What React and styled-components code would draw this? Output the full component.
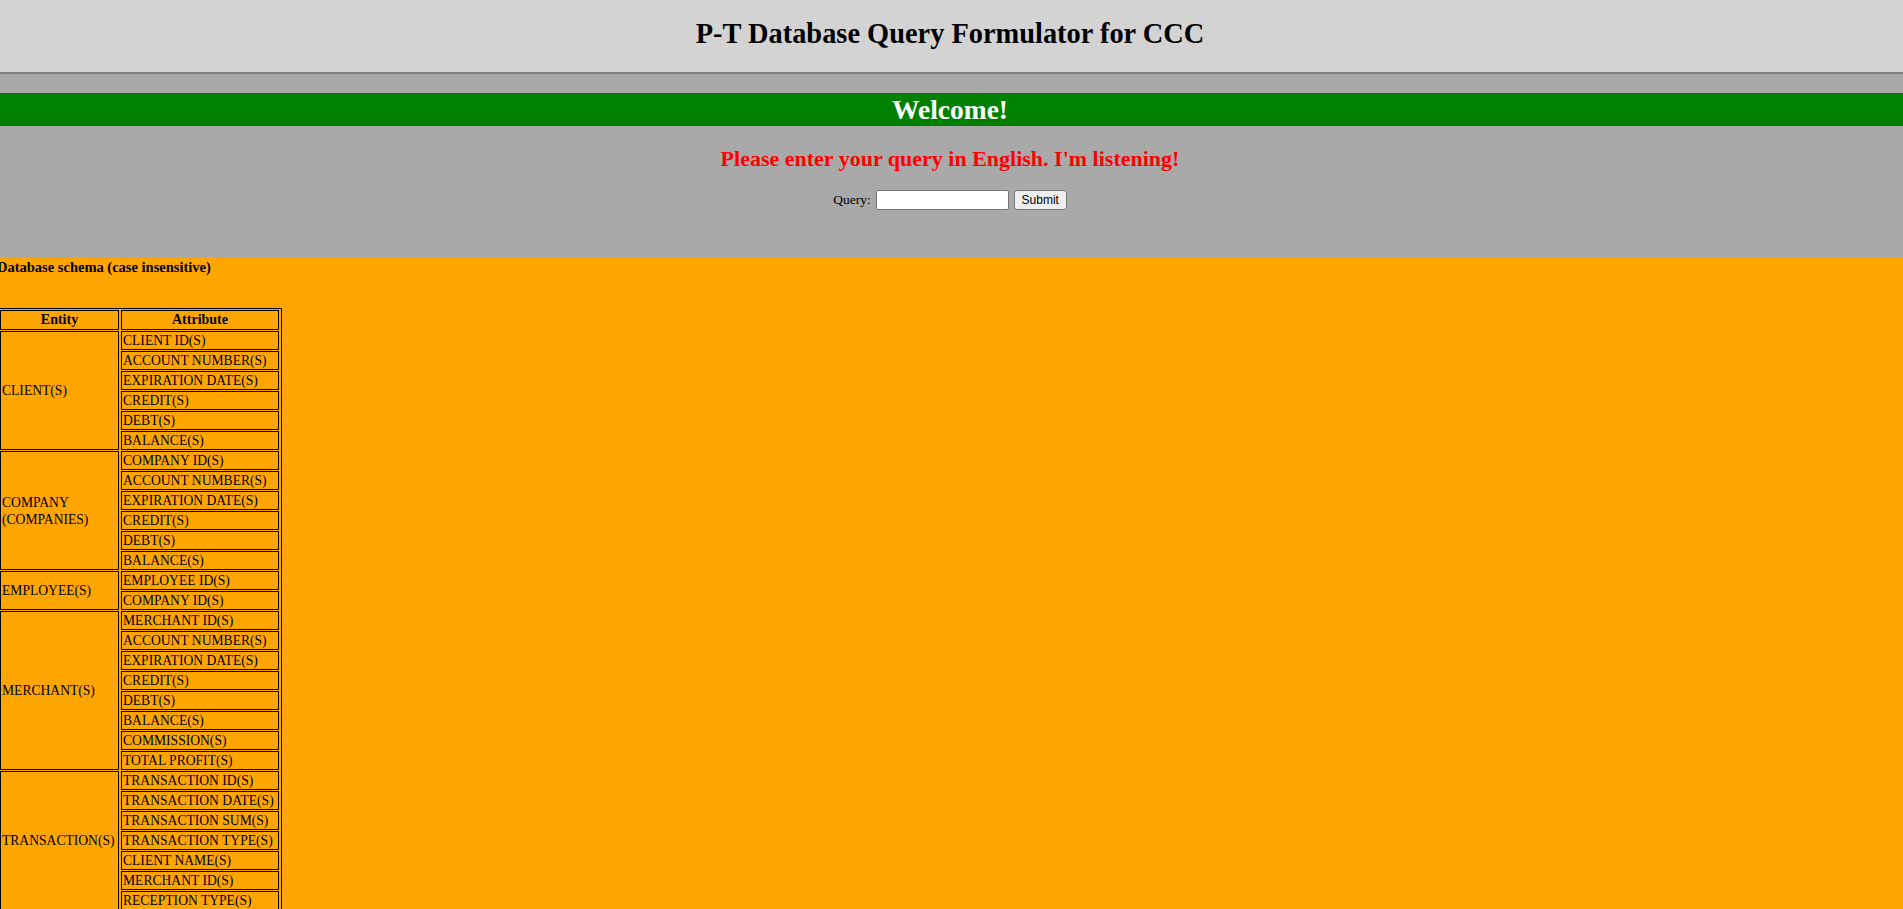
import React from "react";
import styled, { createGlobalStyle } from "styled-components";

const GlobalStyle = createGlobalStyle`
  html, body {
    margin: 0;
    padding: 0;
    overflow: hidden;
    background: #ffa500;
    font-family: "Liberation Serif", "Times New Roman", serif;
    color: #000;
  }
`;

const Page = styled.div`
  margin-left: -3px;
  width: calc(100% + 3px);
`;

const TopBar = styled.header`
  box-sizing: border-box;
  height: 74px;
  padding-top: 17px;
  background: #d3d3d3;
  border-bottom: 2px solid #808080;
`;

const Title = styled.h1`
  margin: 0;
  font-size: 28.4px;
  line-height: 34px;
  font-weight: bold;
  text-align: center;
`;

const Console = styled.section`
  background: #a9a9a9;
  padding: 19px 0 48px;
`;

const Banner = styled.h2`
  margin: 0;
  background: #008000;
  color: #fff;
  font-size: 27.5px;
  line-height: 33px;
  font-weight: bold;
  text-align: center;
`;

const Prompt = styled.h3`
  margin: 20px 0 0;
  color: #ff0000;
  font-size: 22px;
  line-height: 26px;
  font-weight: bold;
  text-align: center;
`;

const QueryForm = styled.form`
  margin-top: 18px;
  height: 20px;
  display: flex;
  justify-content: center;
  align-items: center;
  gap: 5px;
`;

const Label = styled.label`
  font-size: 13.5px;
  line-height: 16px;
`;

const QueryInput = styled.input`
  box-sizing: border-box;
  width: 133px;
  height: 20px;
  margin: 0;
  padding: 1px 2px;
  border: 1px solid #767676;
  border-radius: 2px;
  background: #fff;
  font-family: "Liberation Sans", Arial, sans-serif;
  font-size: 13px;
`;

const SubmitButton = styled.button`
  box-sizing: border-box;
  width: 53px;
  height: 20px;
  margin: 0;
  padding: 0;
  border: 1px solid #767676;
  border-radius: 3px;
  background: #efefef;
  color: #000;
  font-family: "Liberation Sans", Arial, sans-serif;
  font-size: 12px;
  line-height: 18px;
`;

const Schema = styled.section`
  background: #ffa500;
  padding-top: 1px;
  min-height: 700px;
`;

const SchemaTitle = styled.div`
  font-size: 14.5px;
  line-height: 16px;
  font-weight: bold;
  margin-bottom: 33px;
`;

const Table = styled.table`
  table-layout: fixed;
  width: 285px;
  border: 1px solid #000;
  border-spacing: 2px 1px;
`;

const Head = styled.th`
  box-sizing: border-box;
  width: ${(p) => p.$w}px;
  border: 1px solid #000;
  padding: 0 1px;
  font-size: 14px;
  line-height: 18px;
  font-weight: bold;
  text-align: center;
`;

const Cell = styled.td`
  border: 1px solid #000;
  padding: 0 1px;
  font-size: 13.6px;
  line-height: 17px;
  text-align: left;
  vertical-align: middle;
  white-space: ${(p) => (p.$entity ? "normal" : "nowrap")};
  overflow: hidden;
`;

const schema = [
  {
    entity: "CLIENT(S)",
    attrs: ["CLIENT ID(S)", "ACCOUNT NUMBER(S)", "EXPIRATION DATE(S)", "CREDIT(S)", "DEBT(S)", "BALANCE(S)"],
  },
  {
    entity: "COMPANY (COMPANIES)",
    attrs: ["COMPANY ID(S)", "ACCOUNT NUMBER(S)", "EXPIRATION DATE(S)", "CREDIT(S)", "DEBT(S)", "BALANCE(S)"],
  },
  {
    entity: "EMPLOYEE(S)",
    attrs: ["EMPLOYEE ID(S)", "COMPANY ID(S)"],
  },
  {
    entity: "MERCHANT(S)",
    attrs: [
      "MERCHANT ID(S)",
      "ACCOUNT NUMBER(S)",
      "EXPIRATION DATE(S)",
      "CREDIT(S)",
      "DEBT(S)",
      "BALANCE(S)",
      "COMMISSION(S)",
      "TOTAL PROFIT(S)",
    ],
  },
  {
    entity: "TRANSACTION(S)",
    attrs: [
      "TRANSACTION ID(S)",
      "TRANSACTION DATE(S)",
      "TRANSACTION SUM(S)",
      "TRANSACTION TYPE(S)",
      "CLIENT NAME(S)",
      "MERCHANT ID(S)",
      "RECEPTION TYPE(S)",
    ],
  },
];

export default function App() {
  return (
    <Page>
      <GlobalStyle />
      <TopBar>
        <Title>P-T Database Query Formulator for CCC</Title>
      </TopBar>
      <Console>
        <Banner>Welcome!</Banner>
        <Prompt>Please enter your query in English. I'm listening!</Prompt>
        <QueryForm onSubmit={(e) => e.preventDefault()}>
          <Label htmlFor="q">Query:</Label>
          <QueryInput id="q" type="text" />
          <SubmitButton type="submit">Submit</SubmitButton>
        </QueryForm>
      </Console>
      <Schema>
        <SchemaTitle>Database schema (case insensitive)</SchemaTitle>
        <Table>
          <thead>
            <tr>
              <Head $w={119}>Entity</Head>
              <Head $w={158}>Attribute</Head>
            </tr>
          </thead>
          <tbody>
            {schema.map((group) =>
              group.attrs.map((attr, i) => (
                <tr key={group.entity + attr}>
                  {i === 0 && (
                    <Cell $entity rowSpan={group.attrs.length}>
                      {group.entity}
                    </Cell>
                  )}
                  <Cell>{attr}</Cell>
                </tr>
              ))
            )}
          </tbody>
        </Table>
      </Schema>
    </Page>
  );
}
